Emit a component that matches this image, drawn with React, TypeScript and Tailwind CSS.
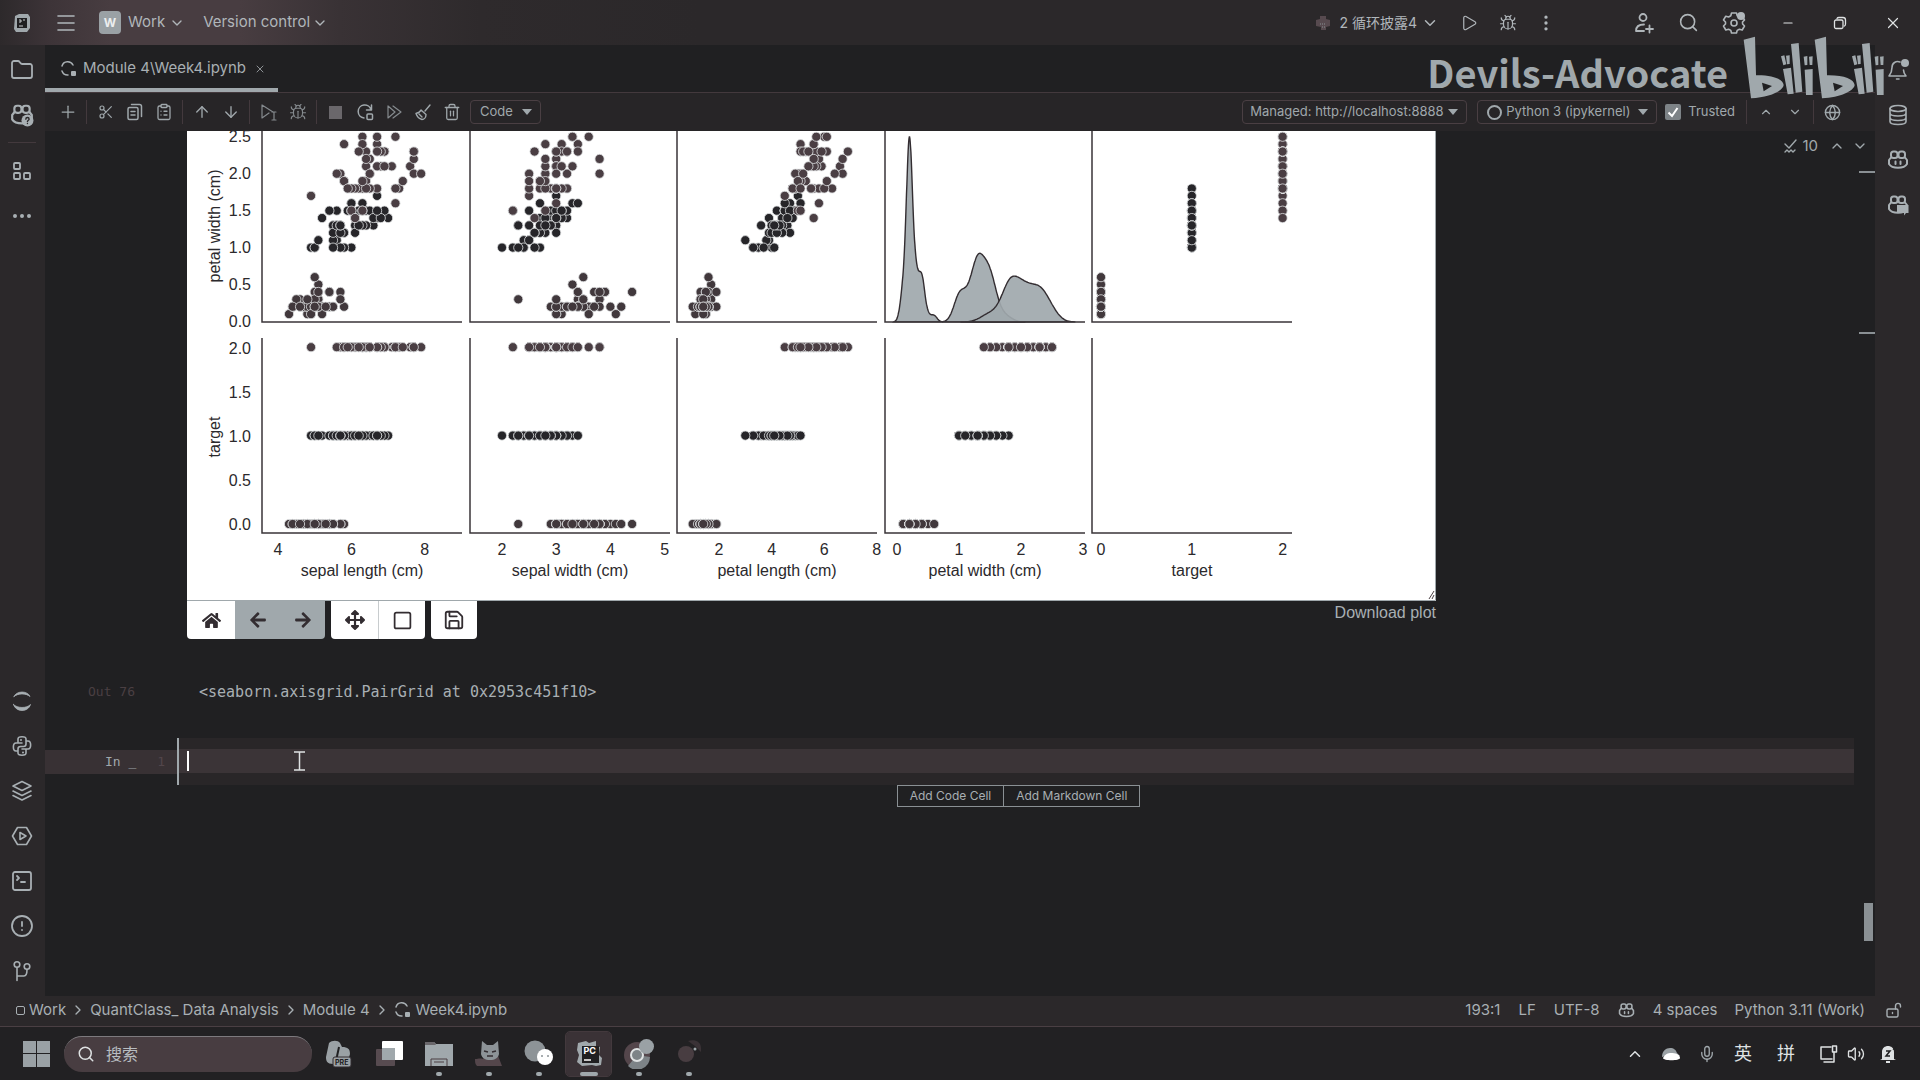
import React from "react";
import {
  ArrowDown, ArrowUp, Bug, ChevronDown, ChevronRight, ChevronUp, CircleAlert,
  ClipboardList, Copy, Ellipsis, EllipsisVertical, Folder, Globe, Menu, Mic, Minus, Play,
  Plus, Save, Scissors, Search, Square, SquareTerminal, Trash2, Volume2, X,
} from "lucide-react";
import { FaArrowLeft, FaArrowRight, FaHome, FaArrowsAlt } from "react-icons/fa";

/* ---------- iris measurements: sepal length, sepal width, petal length, petal width (mm) ---------- */
const SETOSA = `51,35,14,2 49,30,14,2 47,32,13,2 46,31,15,2 50,36,14,2 54,39,17,4 46,34,14,3 50,34,15,2 44,29,14,2 49,31,15,1
54,37,15,2 48,34,16,2 48,30,14,1 43,30,11,1 58,40,12,2 57,44,15,4 54,39,13,4 51,35,14,3 57,38,17,3 51,38,15,3
54,34,17,2 51,37,15,4 46,36,10,2 51,33,17,5 48,34,19,2 50,30,16,2 50,34,16,4 52,35,15,2 52,34,14,2 47,32,16,2
48,31,16,2 54,34,15,4 52,41,15,1 55,42,14,2 49,31,15,2 50,32,12,2 55,35,13,2 49,36,14,1 44,30,13,2 51,34,15,2
50,35,13,3 45,23,13,3 44,32,13,2 50,35,16,6 51,38,19,4 48,30,14,3 51,38,16,2 46,32,14,2 53,37,15,2 50,33,14,2`;
const VERSICOLOR = `70,32,47,14 64,32,45,15 69,31,49,15 55,23,40,13 65,28,46,15 57,28,45,13 63,33,47,16 49,24,33,10 66,29,46,13 52,27,39,14
50,20,35,10 59,30,42,15 60,22,40,10 61,29,47,14 56,29,36,13 67,31,44,14 56,30,45,15 58,27,41,10 62,22,45,15 56,25,39,11
59,32,48,18 61,28,40,13 63,25,49,15 61,28,47,12 64,29,43,13 66,30,44,14 68,28,48,14 67,30,50,17 60,29,45,15 57,26,35,10
55,24,38,11 55,24,37,10 58,27,39,12 60,27,51,16 54,30,45,15 60,34,45,16 67,31,47,15 63,23,44,13 56,30,41,13 55,25,40,13
55,26,44,12 61,30,46,14 58,26,40,12 50,23,33,10 56,27,42,13 57,30,42,12 57,29,42,13 62,29,43,13 51,25,30,11 57,28,41,13`;
const VIRGINICA = `63,33,60,25 58,27,51,19 71,30,59,21 63,29,56,18 65,30,58,22 76,30,66,21 49,25,45,17 73,29,63,18 67,25,58,18 72,36,61,25
65,32,51,20 64,27,53,19 68,30,55,21 57,25,50,20 58,28,51,24 64,32,53,23 65,30,55,18 77,38,67,22 77,26,69,23 60,22,50,15
69,32,57,23 56,28,49,20 77,28,67,20 63,27,49,18 67,33,57,21 72,32,60,18 62,28,48,18 61,30,49,18 64,28,56,21 72,30,58,16
74,28,61,19 79,38,64,20 64,28,56,22 63,28,51,15 61,26,56,14 77,30,61,23 63,34,56,24 64,31,55,18 60,30,48,18 69,31,54,21
67,31,56,24 69,31,51,23 58,27,51,19 68,32,59,23 67,33,57,25 67,30,52,23 63,25,50,19 65,30,52,20 62,34,54,23 59,30,51,18`;

type Row = { v: number[]; target: number };
const parse = (s: string, target: number): Row[] =>
  s.trim().split(/\s+/).map((r) => ({ v: [...r.split(",").map((n) => Number(n) / 10), target], target }));
const ROWS: Row[] = [...parse(SETOSA, 0), ...parse(VERSICOLOR, 1), ...parse(VIRGINICA, 2)];
const DOT = ["#41383c", "#262529", "#4a3e43"];

/* ---------- chart scales ---------- */
const PANEL_X = [75, 283, 490, 698, 905];
const PANEL_W = 200;
const XS = [
  { x0: 91, v0: 4, k: 36.7, label: "sepal length (cm)", ticks: [4, 6, 8] },
  { x0: 315, v0: 2, k: 54.2, label: "sepal width (cm)", ticks: [2, 3, 4, 5] },
  { x0: 532, v0: 2, k: 26.3, label: "petal length (cm)", ticks: [2, 4, 6, 8] },
  { x0: 710, v0: 0, k: 62, label: "petal width (cm)", ticks: [0, 1, 2, 3] },
  { x0: 914, v0: 0, k: 90.8, label: "target", ticks: [0, 1, 2] },
];
const px = (c: number, v: number) => XS[c].x0 + (v - XS[c].v0) * XS[c].k;
const yWidth = (v: number) => 190.5 - v * 73.9;
const yTarget = (v: number) => 393 - v * 88.4;

/* Gaussian density of petal width for each class, Scott bandwidth */
function density(target: number) {
  const xs = ROWS.filter((r) => r.target === target).map((r) => r.v[3]);
  const n = xs.length;
  const m = xs.reduce((a, b) => a + b, 0) / n;
  const sd = Math.sqrt(xs.reduce((a, b) => a + (b - m) ** 2, 0) / (n - 1));
  const h = sd * Math.pow(n, -0.2);
  const lo = Math.min(...xs) - 3 * h;
  const hi = Math.max(...xs) + 3 * h;
  return Array.from({ length: 160 }, (_, i) => {
    const x = lo + ((hi - lo) * i) / 159;
    const d = xs.reduce((a, b) => a + Math.exp(-0.5 * ((x - b) / h) ** 2), 0) / (n * h * 2.5066);
    return [x, d];
  });
}
const CURVES = [0, 1, 2].map(density);
const PEAK = Math.max(...CURVES[0].map((p) => p[1]));

function PairPlot() {
  const text = "#2b292c";
  return (
    <svg className="block w-[1249px] overflow-visible" viewBox="0 0 1249 470" role="img" aria-label="Pair plot of iris features" fontFamily="'Liberation Sans', Arial, sans-serif" fontSize="16">
      {CURVES.map((c, i) => {
        const d = "M" + c.map(([x, y]) => `${px(3, x).toFixed(1)},${(191 - (y / PEAK) * 185).toFixed(1)}`).join("L");
        return <path key={i} d={d + "Z"} fill="#a0a8ac" fillOpacity="0.92" stroke="#332d31" strokeWidth="1.4" />;
      })}
      {[0, 1, 2, 4].map((c) => (
        <g key={c}>
          {ROWS.map((r, i) => (
            <circle key={i} cx={px(c, r.v[c])} cy={yWidth(r.v[3])} r="4.6" fill={DOT[r.target]} stroke="#dfe2e3" strokeWidth="0.8" />
          ))}
        </g>
      ))}
      {[0, 1, 2, 3].map((c) => (
        <g key={c}>
          {ROWS.map((r, i) => (
            <circle key={i} cx={px(c, r.v[c])} cy={yTarget(r.target)} r="4.6" fill={DOT[r.target]} stroke="#dfe2e3" strokeWidth="0.8" />
          ))}
        </g>
      ))}
      {PANEL_X.map((x) => (
        <g key={x} fill="none" stroke="#3a3538" strokeWidth="1.5">
          <path d={`M${x} 0V191H${x + PANEL_W}`} />
          <path d={`M${x} 207V402H${x + PANEL_W}`} />
        </g>
      ))}
      <g fill={text}>
        {["0.0", "0.5", "1.0", "1.5", "2.0", "2.5"].map((t, i) => (
          <text key={t} x="64" y={196 - i * 37} textAnchor="end">{t}</text>
        ))}
        {["0.0", "0.5", "1.0", "1.5", "2.0"].map((t, i) => (
          <text key={t} x="64" y={399 - i * 44} textAnchor="end">{t}</text>
        ))}
        {XS.map((s, c) => (
          <g key={s.label} textAnchor="middle">
            {s.ticks.map((t) => <text key={t} x={px(c, t)} y="424">{t}</text>)}
            <text x={PANEL_X[c] + PANEL_W / 2} y="445">{s.label}</text>
          </g>
        ))}
        <text transform="translate(33 95) rotate(-90)" textAnchor="middle">petal width (cm)</text>
        <text transform="translate(33 306) rotate(-90)" textAnchor="middle">target</text>
      </g>
      <path d="M1242 468l5-8M1245 468l2-4" stroke="#4a4044" strokeWidth="1" />
      <path d="M0 469.5H1248.5V0" fill="none" stroke="#a0a8ac" />
    </svg>
  );
}

/* ---------- icons ---------- */
type P = { className?: string };
const box = { fill: "none", stroke: "currentColor", strokeWidth: 1.6, strokeLinecap: "round" as const, strokeLinejoin: "round" as const };

const AppLogo = () => (
  <svg viewBox="0 0 20 20" className="size-5"><path d="M3 3l4-2h9l2 3v11l-3 4H4l-2-3z" fill="#a0a8ac" /><rect x="5" y="5" width="10" height="10" fill="#202022" /><path d="M7 7h2v2H7M11 7h2M7 13h4" stroke="#c8ccce" fill="none" /></svg>
);
const JupyterFile = () => (
  <svg viewBox="0 0 18 18" className="size-[18px]" {...box}><path d="M2 6a6 6 0 0 1 11-1M2 11a6 6 0 0 0 6 4" strokeWidth="1.5" /><rect x="11" y="11" width="5" height="5" rx="1" fill="currentColor" stroke="none" /></svg>
);
const Jupyter = () => (
  <svg viewBox="0 0 22 22" className="size-[22px]" {...box}><path d="M3 6.500c2.500-6 13.500-6 16 0-4-3.500-12-3.500-16 0zM2.500 14.500c2.500 8 14.500 8 17 0-3.500 4-13.500 4-17 0z" fill="currentColor" strokeWidth="0.800" /></svg>
);
const Copilot = ({ badge, className = "size-[22px]" }: P & { badge?: "help" | "chat" }) => (
  <svg viewBox="0 0 22 22" className={className} {...box} strokeWidth="2">
    <rect x="4" y="2.500" width="6.500" height="6.500" rx="2.500" /><rect x="11.500" y="2.500" width="6.500" height="6.500" rx="2.500" />
    <path d="M4 8.500L2 11v4c3 5 15 5 18 0v-4l-2-2.500" />
    {!badge && <path d="M8.500 12.500v2.500M13.500 12.500v2.500" />}
    {badge === "help" && <g><circle cx="16" cy="16" r="5.500" fill="currentColor" stroke="none" /><path d="M14.500 14.800c0-2 3-2 3 0 0 1-1.500 1-1.500 2.200M16 18.700v.1" stroke="#2b282a" strokeWidth="1.300" /></g>}
    {badge === "chat" && <g stroke="none"><path d="M10 11h11.500v8H19l-2 2.500V19h-7z" fill="currentColor" /></g>}
  </svg>
);
const Structure = () => (
  <svg viewBox="0 0 20 20" className="size-5" {...box} strokeWidth="1.800"><rect x="2" y="2" width="6" height="6" rx="1" /><rect x="2" y="12" width="6" height="6" rx="1" /><rect x="12" y="12" width="6" height="6" rx="1" /></svg>
);
const Python = () => (
  <svg viewBox="0 0 22 22" className="size-[22px]" {...box}><path d="M7 8V4c0-3 8-3 8 0v5c0 1.500-1 2.500-2.500 2.500h-3C8 11.500 7 12.500 7 14v2H5c-3.500 0-3.500-8 0-8h6M15 14v4c0 3-8 3-8 0v-4M15 6h2c3.500 0 3.500 8 0 8h-6" /><path d="M10 5v.1M12 17.500v.1" strokeWidth="2" /></svg>
);
const LayersIcon = () => (
  <svg viewBox="0 0 22 22" className="size-[22px]" {...box}><path d="M11 1.500L20 6l-9 4.500L2 6zM2 11l9 4.500 9-4.500M2 15.500L11 20l9-4.500" /></svg>
);
const Services = () => (
  <svg viewBox="0 0 22 22" className="size-[22px]" {...box}><path d="M6.500 2.500h9L20.500 11l-5 8.500h-9L1.500 11z" /><path d="M9 7.500v7l6-3.500z" /></svg>
);
const Git = () => (
  <svg viewBox="0 0 22 22" className="size-[22px]" {...box}><circle cx="6" cy="4.500" r="2.800" /><circle cx="16" cy="6.500" r="2.800" /><path d="M6 7.500V20.500M6 16h7c2.500 0 3-2 3-6.500" /></svg>
);
const DatabaseIcon = () => (
  <svg viewBox="0 0 22 22" className="size-[22px]" {...box}><ellipse cx="11" cy="4.500" rx="8" ry="3" /><path d="M3 4.500v13c0 4 16 4 16 0v-13M3 9c0 4 16 4 16 0M3 13.500c0 4 16 4 16 0" /></svg>
);
const BellIcon = () => (
  <svg viewBox="0 0 22 22" className="size-[22px]" {...box}><path d="M13 3c-4-1.500-8 1-8 5.500 0 4-1 6-3 8.500h17c-1.500-2-2.500-4-2.500-6M9.500 20h2.500" /><circle cx="18" cy="4" r="4" fill="currentColor" stroke="none" /></svg>
);
const AddUser = () => (
  <svg viewBox="0 0 22 22" className="size-[22px]" {...box} strokeWidth="1.800"><circle cx="10" cy="5.500" r="3.500" /><path d="M11 19H3c0-5 3-6.500 8-6.500M16.500 13.500v7M13 17h7" /></svg>
);
const Gear = () => (
  <svg viewBox="0 0 24 24" className="size-6" {...box}><path d="M9.500 3h5l.7 2.800 2.200 1.200 2.800-.8L22.500 10l-2 2 .1 2 1.900 2-2.300 4-2.800-.8-2.200 1.200L14.500 23h-5l-.7-2.600-2.200-1.200-2.800.8L1.500 16l2-2v-2l-2-2 2.300-3.800 2.800.8 2.200-1.200z" transform="translate(0 -1)" /><circle cx="12" cy="12" r="3" /><circle cx="19" cy="5" r="4" fill="currentColor" stroke="none" /></svg>
);
const Restore = () => (
  <svg viewBox="0 0 14 14" className="size-[14px]" {...box} strokeWidth="1.300"><rect x="1.500" y="4" width="8.500" height="8.500" rx="1.500" /><path d="M4 2.500c.5-1 1-1 2-1h4c2 0 2.500 1 2.500 2.500v4c0 1 0 1.500-1 2" /></svg>
);
const CopyLines = () => (
  <svg viewBox="0 0 18 18" className="size-[18px]" {...box} strokeWidth="1.500"><rect x="2" y="4.500" width="10" height="12" rx="1.500" /><path d="M5.500 1.500h8c1 0 2 1 2 2v10M5 8.500h4M5 12h4" /></svg>
);
const RunCell = () => (
  <svg viewBox="0 0 20 20" className="size-5" {...box} strokeWidth="1.200"><path d="M3 3v13l7-5M3 3l11 7M13 10h4M13 18h4M15 10v8" /></svg>
);
const Restart = () => (
  <svg viewBox="0 0 20 20" className="size-5" {...box} strokeWidth="1.500"><path d="M16 8a6.500 6.500 0 1 0-7 8M16.500 3v5h-5" /><rect x="12" y="12" width="5.500" height="5.500" rx="1" /></svg>
);
const FastForward = () => (
  <svg viewBox="0 0 20 20" className="size-5" {...box} strokeWidth="1.200"><path d="M4 4v12l7-6zM9 4l8 6-8 6" /></svg>
);
const Broom = () => (
  <svg viewBox="0 0 20 20" className="size-5" {...box} strokeWidth="1.400"><path d="M17 3l-5 6M8 8l5 4.500c0 3-2 5-4 5-2-.5-5-3-6-6 2-.5 4-1 5-3.500zM6 12l3 3" /></svg>
);
const InspectOk = () => (
  <svg viewBox="0 0 16 16" className="size-4" {...box} strokeWidth="1.400"><path d="M2 6l4 4 7-8M2 14l2-2 2 2 2-2 2 2 2-2" /></svg>
);
const Lock = () => (
  <svg viewBox="0 0 18 18" className="size-[18px]" {...box} strokeWidth="1.400"><rect x="2" y="8" width="11" height="8" rx="1.500" /><path d="M10.500 8V5c0-3.500 5-3.500 5 0v1M7.500 11.500v1" /></svg>
);

const Bilibili = () => {
  const half = (
    <g>
      <path fillRule="evenodd" d="M42 46L76 37 79 153C130 152 160 165 162 182 160 200 120 219 64 222zM97 175L102 201 127 185z" />
      <path d="M154 96l10-3 6 27-9 3zM169 94l11-1v26l-8 1zM160 134l24-4 8 78-18 2zM184 59l23-3 11 146-20 3zM222 97l11-2v27l-8 1zM238 97l11-1-1 26h-8zM225 136l24-2v78h-20z" />
    </g>
  );
  return (
    <svg viewBox="40 35 426 188" className="w-[142px]" fill="#a0a8ac" role="img" aria-label="bilibili">
      {half}
      <g transform="translate(213 0)">{half}</g>
    </svg>
  );
};

/* ---------- small controls ---------- */
const IconButton = ({ label, className = "", children }: { label: string; className?: string; children: React.ReactNode }) => (
  <button type="button" aria-label={label} className={"flex items-center justify-center shrink-0 " + className}>{children}</button>
);
const Rule = () => <div className="flex h-6 w-[9px] justify-center"><div className="w-px bg-[#43393d]" /></div>;

function Dropdown({ label, value, className, selectClass }: { label: string; value: string; className: string; selectClass: string }) {
  return (
    <label className={"relative flex h-6 items-center rounded-sm border border-[#4a3f43] " + className}>
      <select aria-label={label} className={"h-full w-full appearance-none bg-transparent outline-none " + selectClass}>
        <option>{value}</option>
      </select>
      <svg viewBox="0 0 10 8" className="pointer-events-none absolute right-2 h-2 w-[10px]" fill="#a0a8ac"><path d="M0 1h10L5 7z" /></svg>
    </label>
  );
}

function TitleBar() {
  return (
    <header className="flex h-[45px] items-center bg-[linear-gradient(90deg,#2d292b_0px,#3d3438_50px,#483d41_110px,#483d41_240px,#393235_340px,#2e2a2c_480px,#2b282a_700px)] text-base text-[#b0b6ba]">
      <IconButton label="PyCharm" className="w-11"><AppLogo /></IconButton>
      <IconButton label="Main menu" className="w-11"><Menu className="size-6" strokeWidth={1.600} /></IconButton>
      <button type="button" className="ml-[11px] flex items-center">
        <span className="flex h-[23px] w-[22px] items-center justify-center rounded-sm bg-[#9aa1a5] text-xs font-bold text-[#eceeef]">W</span>
        <span className="ml-[7px] text-[15px]">Work</span>
        <ChevronDown className="ml-1 size-4" />
      </button>
      <button type="button" className="ml-[18px] flex items-center text-[15px]">Version control<ChevronDown className="ml-0.5 size-4" /></button>
      <div className="ml-auto flex items-center">
        <button type="button" className="flex items-center text-[14px]">
          <svg viewBox="0 0 16 16" className="size-4" fill="#574a4f"><path d="M5 1h6v3l4 1v6l-4 1v3H6v-3l-5-1V5l4-1z" /><path d="M5 9h6M7 12h4" stroke="#8a9094" strokeDasharray="1 1" /></svg>
          <span className="ml-2">2 循环披露4</span>
          <ChevronDown className="ml-1 size-[18px]" />
        </button>
        <IconButton label="Run" className="ml-[10px] w-[39px]"><Play className="size-[18px]" strokeWidth={1.600} /></IconButton>
        <IconButton label="Debug" className="w-[39px]"><Bug className="size-[18px]" strokeWidth={1.600} /></IconButton>
        <IconButton label="More actions" className="w-[38px]"><EllipsisVertical className="size-5" /></IconButton>
        <IconButton label="Code with me" className="ml-14 w-[45px]"><AddUser /></IconButton>
        <IconButton label="Search everywhere" className="w-[45px]"><Search className="size-[21px]" strokeWidth={1.800} /></IconButton>
        <IconButton label="Settings" className="w-[45px]"><Gear /></IconButton>
        <IconButton label="Minimize" className="ml-1.5 w-[52px] text-[#dfe2e3]"><Minus className="size-[14px]" /></IconButton>
        <IconButton label="Restore" className="w-[52px] text-[#dfe2e3]"><Restore /></IconButton>
        <IconButton label="Close" className="w-[54px] text-[#dfe2e3]"><X className="size-[18px]" strokeWidth={1.600} /></IconButton>
      </div>
    </header>
  );
}

function LeftStrip() {
  return (
    <nav className="flex w-[45px] shrink-0 flex-col bg-[#2b282a] pt-0.5 pr-px pb-[3px] text-[#a8afb3]">
      <IconButton label="Project" className="h-[45px]"><Folder className="size-6" strokeWidth={1.800} /></IconButton>
      <IconButton label="Copilot help" className="h-[45px]"><Copilot badge="help" className="size-6" /></IconButton>
      <div className="mx-2 my-[5px] h-px bg-[#43393d]" />
      <IconButton label="Structure" className="h-[45px]"><Structure /></IconButton>
      <IconButton label="More tools" className="h-[45px]"><Ellipsis className="size-6" /></IconButton>
      <div className="mt-auto flex flex-col">
        <IconButton label="Jupyter" className="h-[45px]"><Jupyter /></IconButton>
        <IconButton label="Python console" className="h-[45px]"><Python /></IconButton>
        <IconButton label="Python packages" className="h-[45px]"><LayersIcon /></IconButton>
        <IconButton label="Services" className="h-[45px]"><Services /></IconButton>
        <IconButton label="Terminal" className="h-[45px]"><SquareTerminal className="size-6" strokeWidth={1.800} /></IconButton>
        <IconButton label="Problems" className="h-[45px]"><CircleAlert className="size-6" strokeWidth={1.800} /></IconButton>
        <IconButton label="Version control" className="h-[45px]"><Git /></IconButton>
      </div>
    </nav>
  );
}

function Toolbar() {
  const b = "w-[29px]";
  return (
    <div className="flex h-[39px] items-center border-t border-[#43393d] bg-[#272527] pl-2 text-[#a0a8ac]">
      <IconButton label="Add cell" className={b}><Plus className="size-5" strokeWidth={1.500} /></IconButton>
      <Rule />
      <IconButton label="Cut" className={b}><Scissors className="size-4" strokeWidth={1.800} /></IconButton>
      <IconButton label="Copy" className={b}><CopyLines /></IconButton>
      <IconButton label="Paste" className={b}><ClipboardList className="size-[18px]" strokeWidth={1.700} /></IconButton>
      <Rule />
      <IconButton label="Move up" className={b}><ArrowUp className="size-[18px]" strokeWidth={1.800} /></IconButton>
      <IconButton label="Move down" className={b}><ArrowDown className="size-[18px]" strokeWidth={1.800} /></IconButton>
      <Rule />
      <IconButton label="Run cell" className={b + " text-[#858a8e]"}><RunCell /></IconButton>
      <IconButton label="Debug cell" className={b + " text-[#858a8e]"}><Bug className="size-[18px]" strokeWidth={1.500} /></IconButton>
      <Rule />
      <IconButton label="Interrupt kernel" className={b}><span className="size-[13px] bg-[#6a676b]" /></IconButton>
      <IconButton label="Restart kernel" className={b}><Restart /></IconButton>
      <IconButton label="Run all" className={b + " text-[#858a8e]"}><FastForward /></IconButton>
      <IconButton label="Clear outputs" className={b}><Broom /></IconButton>
      <IconButton label="Delete cell" className={b}><Trash2 className="size-[18px]" strokeWidth={1.700} /></IconButton>
      <Dropdown label="Cell type" value="Code" className="ml-1 w-[71px]" selectClass="pl-[9px] text-[13px]" />

      <div className="ml-auto flex items-center text-[13px]">
        <Dropdown label="Jupyter server" value="Managed: http://localhost:8888" className="w-[225px]" selectClass="pl-[7px]" />
        <div className="relative ml-[10px] flex items-center">
          <span className="absolute left-[10px] size-[15px] rounded-full border-2 border-[#a0a8ac]" />
          <Dropdown label="Kernel" value="Python 3 (ipykernel)" className="w-[180px]" selectClass="pl-[28px]" />
        </div>
        <label className="ml-2 flex items-center gap-[7px]">
          <span className="relative flex size-4 items-center justify-center">
            <input type="checkbox" defaultChecked className="size-4 appearance-none rounded-[2px] bg-[#7d8387]" />
            <svg viewBox="0 0 12 12" className="pointer-events-none absolute size-3" fill="none" stroke="#fff" strokeWidth="2"><path d="M1.500 6.500l3.500 3.500 5.500-8" /></svg>
          </span>
          Trusted
        </label>
        <div className="ml-[7px] flex"><Rule /></div>
        <IconButton label="Previous cell" className={b}><ChevronUp className="size-[14px]" /></IconButton>
        <IconButton label="Next cell" className={b}><ChevronDown className="size-[14px]" /></IconButton>
        <Rule />
        <IconButton label="Open in browser" className={b}><Globe className="size-[17px]" /></IconButton>
        <div className="w-7" />
      </div>
    </div>
  );
}

function Editor() {
  return (
    <section className="relative flex-1 pb-10">
      <div className="absolute top-1 right-1 flex items-center text-[#a0a8ac]">
        <InspectOk /><span className="ml-[3px] text-[15px]">10</span>
        <IconButton label="Previous problem" className="ml-[7px] w-[23px]"><ChevronUp className="size-4" /></IconButton>
        <IconButton label="Next problem" className="w-[23px]"><ChevronDown className="size-4" /></IconButton>
      </div>
      <div className="absolute top-10 right-0 h-0.5 w-4 bg-[#8a9094]" />
      <div className="absolute top-[201px] right-0 h-0.5 w-4 bg-[#8a9094]" />
      <div className="absolute top-[772px] right-0.5 h-[38px] w-[9px] bg-[#8a9094]" />

      <div className="ml-[142px] w-[1249px]">
        <div className="bg-white"><PairPlot /></div>
        <div className="flex items-start justify-between">
          <div className="flex h-[38px] gap-1.5 text-[#332d31]">
            <div className="flex overflow-hidden rounded-b-sm">
              <IconButton label="Home" className="w-12 bg-white"><FaHome className="size-[19px]" /></IconButton>
              <IconButton label="Back" className="w-[45px] bg-[#a0a8ac]"><FaArrowLeft className="size-[18px]" /></IconButton>
              <IconButton label="Forward" className="w-[45px] bg-[#a0a8ac]"><FaArrowRight className="size-[18px]" /></IconButton>
            </div>
            <div className="flex overflow-hidden rounded-b-sm bg-white">
              <IconButton label="Pan" className="w-12 border-r border-[#c8ccce]"><FaArrowsAlt className="size-5" /></IconButton>
              <IconButton label="Zoom" className="w-[46px]"><Square className="size-[21px]" strokeWidth={2} /></IconButton>
            </div>
            <IconButton label="Save figure" className="w-[46px] rounded-b-sm bg-white"><Save className="size-[22px]" strokeWidth={2} /></IconButton>
          </div>
          <a href="#download" className="font-['Liberation_Sans',Arial,sans-serif] text-base leading-6 text-[#a8afb3]">Download plot</a>
        </div>
      </div>

      <div className="mt-[43px] flex h-5 items-center font-['DejaVu_Sans_Mono',monospace]">
        <span className="w-[154px] pl-[43px] text-[13px] text-[#4a3f43]">Out 76</span>
        <span className="text-[15px] text-[#a8afb3]">&lt;seaborn.axisgrid.PairGrid at 0x2953c451f10&gt;</span>
      </div>

      <div className="mt-9 mr-[21px] flex items-center font-['DejaVu_Sans_Mono',monospace] text-[13px]">
        <div className="flex h-6 w-[132px] items-center justify-between bg-[#383134] pr-3 pl-[60px] text-[#a0a8ac]">
          <span>In _</span><span className="text-[#52464b]">1</span>
        </div>
        <div className="relative h-[47px] flex-1 border-l-2 border-[#a0a8ac] bg-[#292628] py-[11px]">
          <div className="relative flex h-6 items-center bg-[#3b3437] pl-2">
            <span className="h-5 w-0.5 bg-white" />
            <input aria-label="Code cell 1" className="h-full flex-1 bg-transparent caret-white outline-none" />
            <svg viewBox="0 0 11 20" className="pointer-events-none absolute left-[115px] h-5 w-[11px]" fill="none" stroke="#dfe2e3" strokeWidth="1.500"><path d="M0 1h11M0 19h11M5.500 1v18" /></svg>
          </div>
        </div>
      </div>
      <div className="flex justify-center pr-6 pl-[141px]">
        <div className="flex h-[22px] border border-[#8a9094] bg-[#202022] text-[12px] text-[#a8afb3]">
          <button type="button" className="border-r border-[#8a9094] px-3">Add Code Cell</button>
          <button type="button" className="px-3">Add Markdown Cell</button>
        </div>
      </div>
    </section>
  );
}

function StatusBar() {
  const crumb = "flex items-center";
  return (
    <footer className="flex h-[31px] items-center border-b border-[#4a3f43] bg-[#2b282a] pb-0.5 pl-[16px] text-[15px] text-[#a8afb3]">
      <nav aria-label="Breadcrumb" className="flex items-center">
        <a href="#work" className={crumb}><span className="mr-1 size-[9px] rounded-[2px] border-[1.500px] border-current" />Work</a>
        <ChevronRight className="mx-1 size-4" />
        <a href="#quant" className={crumb}>QuantClass_ Data Analysis</a>
        <ChevronRight className="mx-1 size-4" />
        <a href="#module" className={crumb}>Module 4</a>
        <ChevronRight className="mx-1 size-4" />
        <a href="#file" className={crumb + " gap-1"}><JupyterFile />Week4.ipynb</a>
      </nav>
      <div className="ml-auto flex items-center">
        <button type="button">193:1</button>
        <button type="button" className="ml-[18px]">LF</button>
        <button type="button" className="ml-[18px]">UTF-8</button>
        <IconButton label="Copilot status" className="ml-[18px]"><Copilot className="size-[17px]" /></IconButton>
        <button type="button" className="ml-[18px]">4 spaces</button>
        <button type="button" className="ml-[17px]">Python 3.11 (Work)</button>
        <IconButton label="File is writable" className="ml-5 mr-[17px]"><Lock /></IconButton>
      </div>
    </footer>
  );
}

function TaskIcon({ label, running, active, children }: { label: string; running?: boolean; active?: boolean; children: React.ReactNode }) {
  return (
    <button type="button" aria-label={label} className={"relative flex h-11 w-[45px] items-center justify-center rounded " + (active ? "bg-[#3a3236] outline-1 outline-[#43393d]" : "")}>
      <svg viewBox="0 0 30 30" className="size-[30px]">{children}</svg>
      {running && <span className={"absolute bottom-0 h-1 rounded-full bg-[#a0a8ac] " + (active ? "w-[18px]" : "w-1.5")} />}
    </button>
  );
}

function Taskbar() {
  return (
    <div className="flex h-[53px] items-center bg-[#222123] pl-[23px]">
      <IconButton label="Start" className="w-7">
        <svg viewBox="0 0 28 28" className="size-7" fill="#9aa1a5"><path d="M0 1h13v12H0zM14 1h13v12H14zM0 14h13v13H0zM14 14h13v13H14z" /></svg>
      </IconButton>
      <label className="ml-[13px] flex h-9 w-[248px] items-center rounded-full border-t border-[#7d7a7e] bg-[#483d41] pl-[13px]">
        <Search className="size-[18px] text-[#dfe2e3]" />
        <input aria-label="搜索" placeholder="搜索" className="ml-[11px] w-40 bg-transparent text-base text-[#b8bdc0] outline-none placeholder:text-[#b8bdc0]" />
      </label>
      <div className="ml-1 flex gap-[5px]">
        <TaskIcon label="Microsoft 365 Copilot">
          <path d="M5 4c3-3 9-3 11 0l2 4c6 0 8 2 8 7l-3 10H9C3 25 2 22 2 18z" fill="#9aa1a5" /><path d="M15 8l-3 14" stroke="#202022" strokeWidth="2" />
          <rect x="9" y="18" width="18" height="10" rx="2" fill="#9aa1a5" stroke="#332d31" /><text x="11" y="26" fontSize="7" fontWeight="700" fill="#202022">PRE</text>
        </TaskIcon>
        <TaskIcon label="Task view">
          <rect x="2" y="10" width="19" height="17" rx="1" fill="#574b50" /><rect x="8" y="2" width="21" height="19" rx="1" fill="#fff" /><rect x="8" y="9" width="13" height="12" fill="#a0a8ac" />
        </TaskIcon>
        <TaskIcon label="File explorer" running>
          <path d="M1 3h9l2 2h17v22H1z" fill="#a0a8ac" /><path d="M1 3h9l2 3H1z" fill="#6a676b" /><path d="M7 27v-7h16v7M10 23h10" fill="none" stroke="#4a3f43" />
        </TaskIcon>
        <TaskIcon label="Cat client" running>
          <path d="M1 20c3 0 5-1 8 0l2-6h12l5 13H3c-2-2-2-4-2-7z" fill="#54464b" /><path d="M8 2l5 4h6l5-4 1 13c-1 4-4 6-9 6s-8-2-9-6z" fill="#8d9397" /><path d="M10 12l4 1M22 12l-4 1M13 17h6" stroke="#332d31" strokeWidth="1.500" />
        </TaskIcon>
        <TaskIcon label="WeChat" running>
          <circle cx="11" cy="12" r="10.500" fill="#8d9397" /><circle cx="21" cy="18" r="8" fill="#fff" /><circle cx="18" cy="17" r="1" fill="#8d9397" /><circle cx="24" cy="17" r="1" fill="#8d9397" />
        </TaskIcon>
        <TaskIcon label="PyCharm" running active>
          <path d="M4 4l8-2 3 2 7-2v5l4 1-1 8 3 3-1 7-5 1-4-1-10 1-5-4 2-7-2-5z" fill="#a0a8ac" /><rect x="8" y="7" width="17" height="17" fill="#202022" />
          <text x="9.500" y="15" fontSize="9" fontWeight="700" fill="#fff">PC</text><path d="M10 21h7" stroke="#fff" strokeWidth="1.500" />
        </TaskIcon>
        <TaskIcon label="Chrome" running>
          <circle cx="13" cy="16" r="13" fill="#54464b" /><path d="M13 16L4 27a13 13 0 0 0 22-9z" fill="#7d8387" /><circle cx="13" cy="16" r="7" fill="#dfe2e3" /><circle cx="13" cy="16" r="5" fill="#7d8387" /><circle cx="22.500" cy="7.500" r="7.500" fill="#9aa1a5" />
        </TaskIcon>
        <TaskIcon label="Recorder" running>
          <path d="M14 2c6-2 13 0 13 7v4l-6-6z" fill="#3a3236" /><circle cx="12" cy="15" r="8" fill="#483d41" /><circle cx="21" cy="10" r="1.500" fill="#a0a8ac" />
        </TaskIcon>
      </div>
      <div className="ml-auto flex items-center text-[#dfe2e3]">
        <IconButton label="Show hidden icons" className="w-9"><ChevronUp className="size-[18px]" /></IconButton>
        <IconButton label="OneDrive" className="w-9"><svg viewBox="0 0 20 14" className="h-[14px] w-5"><path d="M1 10c0-6 4-9 8-9s6 2 7 5l3 3H5z" fill="#9aa1a5" /><path d="M2 11c2-4 5-5 8-5 4 0 9 1 9 5 0 3-17 3-17 0z" fill="#fff" /></svg></IconButton>
        <IconButton label="Microphone" className="w-9 text-[#a0a8ac]"><Mic className="size-[18px]" strokeWidth={1.800} /></IconButton>
        <button type="button" className="w-9 text-[18px]">英</button>
        <button type="button" className="w-[50px] text-[18px]">拼</button>
        <IconButton label="Network" className="ml-[3px] w-[30px]"><svg viewBox="0 0 20 20" className="size-5" {...box} strokeWidth="1.500"><path d="M12 3H2v12h11M5 18h10M15 18V8" /><rect x="13.500" y="2" width="4" height="6" /></svg></IconButton>
        <IconButton label="Volume" className="w-6"><Volume2 className="size-[18px]" strokeWidth={1.800} /></IconButton>
        <IconButton label="Notifications" className="mr-5 ml-2 w-6"><svg viewBox="0 0 20 20" className="size-5"><path d="M4 15V8c0-4 3-6 6-6s6 2 6 6v7l2 1H2z" fill="#dfe2e3" /><path d="M8 17h4v2H8z" fill="#dfe2e3" /><path d="M8 7h4l-4 5h4M15 1h4l-3 4h3" fill="none" stroke="#202022" strokeWidth="1.500" /></svg></IconButton>
      </div>
    </div>
  );
}

export default function App() {
  return (
    <div className="flex min-h-screen flex-col overflow-hidden bg-[#202022] font-[Inter,'Noto_Sans_CJK_SC',sans-serif]">
      <TitleBar />
      <div className="flex flex-1">
        <LeftStrip />
        <main className="relative flex flex-1 flex-col">
          <div className="flex h-[47px] items-stretch">
            <div className="flex w-[233px] items-center border-b-4 border-[#a0a8ac] pt-1 pl-[15px] text-[#a8afb3]">
              <JupyterFile />
              <button type="button" className="ml-[5px] text-[15px]">Module 4\Week4.ipynb</button>
              <IconButton label="Close tab" className="mr-2.5 ml-auto size-4"><X className="size-3" strokeWidth={1.600} /></IconButton>
            </div>
          </div>
          <Toolbar />
          <Editor />
          <div className="pointer-events-none absolute -top-[9px] -right-[10px] flex items-start gap-[15px] text-[#a0a8ac]">
            <span className="mt-2 font-['Noto_Sans_CJK_SC',sans-serif] text-[38px] leading-[56px] font-bold">Devils-Advocate</span>
            <Bilibili />
          </div>
        </main>
        <aside className="flex w-[45px] shrink-0 flex-col bg-[#2b282a] pt-0.5 text-[#a8afb3]">
          <IconButton label="Notifications" className="h-[45px]"><BellIcon /></IconButton>
          <IconButton label="Database" className="h-[45px]"><DatabaseIcon /></IconButton>
          <IconButton label="Copilot" className="h-[45px]"><Copilot /></IconButton>
          <IconButton label="Copilot chat" className="h-[45px]"><Copilot badge="chat" /></IconButton>
        </aside>
      </div>
      <StatusBar />
      <Taskbar />
    </div>
  );
}
